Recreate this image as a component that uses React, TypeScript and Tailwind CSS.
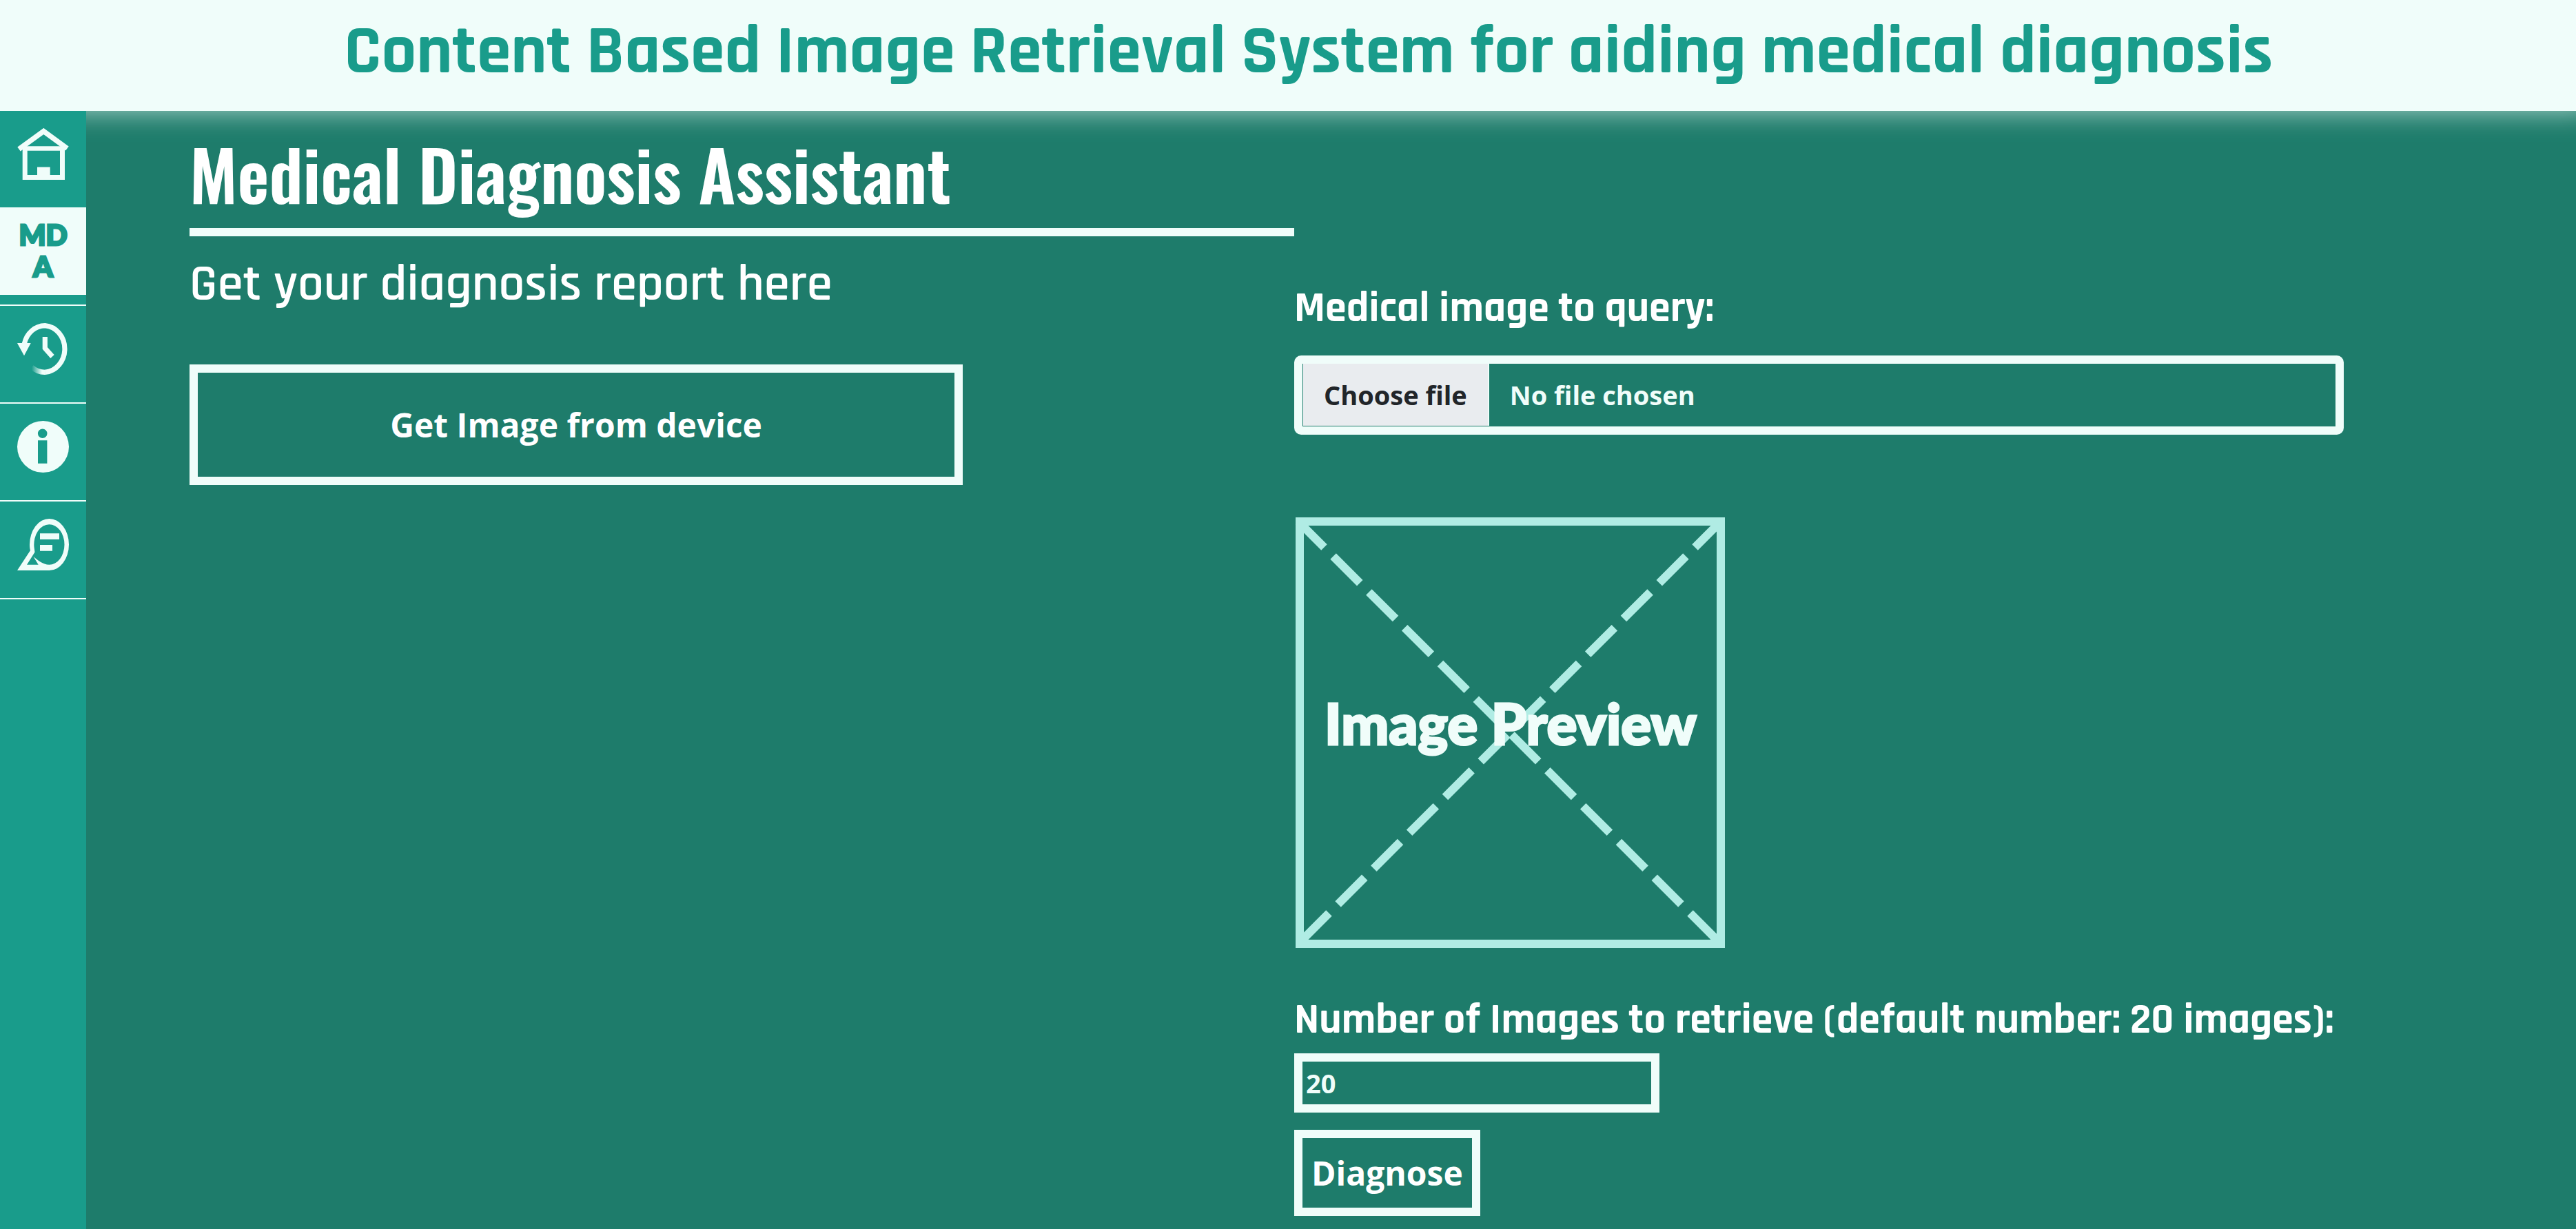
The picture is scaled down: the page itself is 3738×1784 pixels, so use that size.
import React, { useState } from "react";

function HomeIcon() {
  return (
    <svg viewBox="0 0 75 75" className="size-[75px]" fill="none" stroke="currentColor" strokeWidth="7" aria-hidden="true">
      <path d="M2.5 30.5 38.3 4.5 72.5 29.5" strokeWidth="7.5" />
      <path d="M8 29.5h60" strokeWidth="6.5" />
      <path d="M11.2 29v42.5h54.3V29" />
      <path d="M29 56.5h18.7V74H29z" fill="currentColor" stroke="none" />
    </svg>
  );
}

function HistoryIcon() {
  return (
    <svg viewBox="0 0 75 75" className="size-[75px]" fill="none" stroke="currentColor" strokeWidth="7.2" aria-hidden="true">
      <defs>
        <linearGradient id="tail" gradientUnits="userSpaceOnUse" x1="21" y1="0" x2="36" y2="0">
          <stop offset="0" stopColor="#f0fdfa" stopOpacity="0" />
          <stop offset="1" stopColor="#f0fdfa" />
        </linearGradient>
      </defs>
      <path d="M10.3 30A31 34 0 0 1 40.3 3.6A31 34 0 0 1 40.3 71.4" />
      <path d="M40.8 71.4A31 34 0 0 1 21 64" stroke="url(#tail)" />
      <path d="M0 29h19.7L10 47.3z" fill="currentColor" stroke="none" />
      <path d="M40.3 20v16.5L51 48.5" />
    </svg>
  );
}

function InfoIcon() {
  return (
    <svg viewBox="0 0 75 75" className="size-[75px]" fill="currentColor" aria-hidden="true">
      <path
        fillRule="evenodd"
        d="M37.5 0a37.5 37.5 0 1 1 0 75a37.5 37.5 0 1 1 0-75zM36.7 11.4a6.8 6.8 0 1 0 0 13.6a6.8 6.8 0 1 0 0-13.6zM30 28.3v33.4h13.4V28.3z"
      />
    </svg>
  );
}

function ChatIcon() {
  return (
    <svg viewBox="0 0 75 75" className="size-[75px]" fill="currentColor" aria-hidden="true">
      <path
        fillRule="evenodd"
        d="M0 75 19 46C18.2 43 18 40 18 37.5A28.5 37.5 0 0 1 75 37.5A28.5 37.5 0 0 1 46.5 75ZM25.5 48.5 14 66.7H30.7L23.5 55C30 60 37 66.7 46.5 66.7A22 29.2 0 0 0 46.5 8.3A22 29.2 0 0 0 24.5 41Z"
      />
      <path d="M33 21.3h28V30H33zM33 38h18v8.7H33z" />
    </svg>
  );
}

function PreviewPlaceholder() {
  return (
    <svg viewBox="0 0 625 625" className="mt-[120px] size-[625px]" role="img" aria-label="Image Preview">
      <g fill="none" stroke="#b0ece4" strokeWidth="12">
        <path d="M8 6h611v613H8z" />
        <path d="M6 6 619 619M619 6 6 619" strokeDasharray="54.7 18.55" strokeDashoffset="1.7" />
      </g>
      <text
        x="314"
        y="330"
        textAnchor="middle"
        stroke="#f0fdfa"
        strokeWidth="3"
        className="fill-[#f0fdfa] font-['Lato',sans-serif] text-[82px] font-black"
      >
        Image Preview
      </text>
    </svg>
  );
}

const line = "flex justify-center border-b-2 border-[#f0fdfa] pt-[25px] pb-10";

export default function App() {
  const [count, setCount] = useState("20");
  const [fileName, setFileName] = useState("No file chosen");

  return (
    <div className="flex min-h-screen flex-col bg-[#1e7c6b] font-['Segoe_UI','Open_Sans',sans-serif] text-white">
      <header className="relative z-10 bg-[#f0fdfa] pt-4 pb-[25px] pl-[60px] text-center shadow-[0_-20px_37px_20px_rgba(240,253,250,0.7)]">
        <h1 className="font-['Rajdhani','Roboto_Condensed',sans-serif] text-[100px] leading-[120px] font-bold text-[#199c8b]">
          Content Based Image Retrieval System for aiding medical diagnosis
        </h1>
      </header>
      <div className="flex grow">
        <nav className="relative z-20 w-[125px] shrink-0 bg-[#199c8b] text-[#f0fdfa]" aria-label="Main">
          <ul>
            <li>
              <a href="#home" aria-label="Home" className="flex justify-center pt-[25px] pb-10">
                <HomeIcon />
              </a>
            </li>
            <li className="border-b-2 border-[#f0fdfa] pb-[14px]">
              <a
                href="#mda"
                aria-current="page"
                className="flex flex-col items-center bg-[#f0fdfa] pt-[17px] pb-[18px] font-['Lato',sans-serif] text-[41px] leading-[46px] font-black text-[#199c8b] [-webkit-text-stroke:3px_#199c8b]"
              >
                <span>MD</span>
                <span>A</span>
              </a>
            </li>
            <li>
              <a href="#history" aria-label="History" className={line}>
                <HistoryIcon />
              </a>
            </li>
            <li>
              <a href="#about" aria-label="About" className={line}>
                <InfoIcon />
              </a>
            </li>
            <li>
              <a href="#feedback" aria-label="Feedback" className={line}>
                <ChatIcon />
              </a>
            </li>
          </ul>
        </nav>
        <main className="grid grow grid-cols-2 items-start pt-[30px] pr-[257px] pl-[150px]">
          <section>
            <h2 className="border-b-12 border-[#f0fdfa] pb-5 font-['Oswald','Roboto_Condensed',sans-serif] text-[100px] leading-[120px] font-semibold">
              Medical Diagnosis Assistant
            </h2>
            <p className="mt-[25px] font-['Rajdhani','Roboto_Condensed',sans-serif] text-[75px] leading-[90px] font-semibold">
              Get your diagnosis report here
            </p>
            <button
              type="button"
              className="mt-[71px] w-7/10 border-12 border-[#f0fdfa] py-[38px] text-[48px] leading-[75px] font-bold"
            >
              Get Image from device
            </button>
          </section>
          <form className="mt-[220px] flex w-19/20 flex-col items-start" onSubmit={(e) => e.preventDefault()}>
            <label htmlFor="query" className="font-['Rajdhani','Roboto_Condensed',sans-serif] text-[62px] leading-[74px] font-bold">
              Medical image to query:
            </label>
            <label className="mt-[31px] flex w-full cursor-pointer overflow-hidden rounded-[10px] border-12 border-[#f0fdfa] pb-px pl-px text-[38px] leading-[60px] font-bold text-[#f0fdfa]">
              <input
                id="query"
                type="file"
                accept="image/*"
                className="sr-only"
                onChange={(e) => setFileName(e.target.files?.[0]?.name ?? "No file chosen")}
              />
              <span className="border-r-2 border-[#f0fdfa] bg-[#e9ecef] px-[30px] py-[15px] text-[#212529]">Choose file</span>
              <span className="px-[30px] py-[15px]">{fileName}</span>
            </label>
            <PreviewPlaceholder />
            <label htmlFor="count" className="mt-[68px] font-['Rajdhani','Roboto_Condensed',sans-serif] text-[62px] leading-[74px] font-bold whitespace-nowrap">
              Number of Images to retrieve (default number: 20 images):
            </label>
            <input
              id="count"
              type="text"
              inputMode="numeric"
              value={count}
              onChange={(e) => setCount(e.target.value)}
              className="mt-[11px] h-[86px] w-[530px] border-12 border-[#f0fdfa] bg-transparent px-[5px] text-[38px] font-bold text-[#f0fdfa] outline-none"
            />
            <button type="submit" className="mt-[25px] border-12 border-[#f0fdfa] px-[13px] py-[13px] text-[48px] leading-[75px] font-bold">
              Diagnose
            </button>
          </form>
        </main>
      </div>
    </div>
  );
}
